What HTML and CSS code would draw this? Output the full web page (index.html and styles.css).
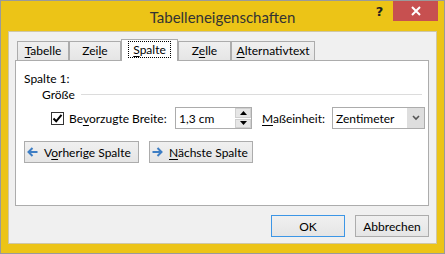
FILE: index.html
```html
<!DOCTYPE html>
<html lang="de">
<head>
<meta charset="utf-8">
<title>Tabelleneigenschaften</title>
<link rel="stylesheet" href="styles.css">
</head>
<body>
<div class="window">
  <div class="titlebar">
    <div></div>
    <div class="title">Tabelleneigenschaften</div>
    <div class="controls">
      <span class="help">?</span>
      <span class="close"><svg width="10" height="10" viewBox="0 0 10 10"><path d="M1 1 L9 9 M9 1 L1 9" stroke="#fff" stroke-width="2"/></svg></span>
    </div>
  </div>
  <div class="client">
    <div class="tabs">
      <div class="tab t1"><span><u>T</u>abelle</span></div>
      <div class="tab t2"><span>Zei<u>l</u>e</span></div>
      <div class="tab t3 active"><span class="focus"><u>S</u>palte</span></div>
      <div class="tab t4"><span>Z<u>e</u>lle</span></div>
      <div class="tab t5"><span><u>A</u>lternativtext</span></div>
    </div>
    <div class="panel">
      <div class="heading">Spalte 1:</div>
      <div class="group"><span>Größe</span><span class="rule"></span></div>
      <div class="row">
        <span class="checkbox"><svg width="11" height="11" viewBox="0 0 11 11"><path d="M1.5 5.5 L4.2 8.3 L9.5 1.8" fill="none" stroke="#000" stroke-width="2"/></svg></span>
        <span class="label width-label">Be<u>v</u>orzugte Breite:</span>
        <div class="spin">
          <span class="value">1,3 cm</span>
          <span class="spinbtns">
            <span class="sb"><svg width="7" height="4" viewBox="0 0 7 4"><path d="M0 4 L3.5 0 L7 4 Z" fill="#000"/></svg></span>
            <span class="sb"><svg width="7" height="4" viewBox="0 0 7 4"><path d="M0 0 L3.5 4 L7 0 Z" fill="#000"/></svg></span>
          </span>
        </div>
        <span class="label unit"><u>M</u>aßeinheit:</span>
        <div class="select">
          <span class="value">Zentimeter</span>
          <span class="drop"><svg width="8" height="6" viewBox="0 0 8 6"><path d="M1 1 L4 4 L7 1" fill="none" stroke="#555" stroke-width="1.6"/></svg></span>
        </div>
      </div>
      <div class="navrow">
        <div class="btn nav prev"><svg width="11" height="10" viewBox="0 0 11 10"><path d="M10.5 5 H2 M5.5 1 L1.5 5 L5.5 9" fill="none" stroke="#3e7ec4" stroke-width="2"/></svg><span>V<u>o</u>rherige Spalte</span></div>
        <div class="btn nav next"><svg width="11" height="10" viewBox="0 0 11 10"><path d="M0.5 5 H9 M5.5 1 L9.5 5 L5.5 9" fill="none" stroke="#3e7ec4" stroke-width="2"/></svg><span><u>N</u>ächste Spalte</span></div>
      </div>
    </div>
    <div class="footer">
      <div class="btn ok">OK</div>
      <div class="btn cancel">Abbrechen</div>
    </div>
  </div>
</div>
</body>
</html>
```

FILE: styles.css
```css
* { box-sizing: border-box; }
html, body { margin: 0; padding: 0; }
body {
  width: 445px;
  height: 254px;
  overflow: hidden;
  font-family: Lato, "Noto Sans", sans-serif;
  font-size: 12px;
  color: #000;
  white-space: nowrap;
}
u { text-decoration: underline; text-underline-offset: 2px; text-decoration-thickness: 1px; }

.window {
  width: 445px;
  height: 254px;
  border: 1px solid #9a9a9a;
  background: #ecc417;
  padding: 0 7px 9px 7px;
  display: flex;
  flex-direction: column;
}
.titlebar {
  height: 30px;
  margin: 0 -7px;
  display: grid;
  grid-template-columns: 1fr auto 1fr;
  align-items: center;
}
.title {
  font-size: 15px;
  color: #333;
  padding-top: 1px;
}
.controls {
  align-self: start;
  justify-self: end;
  display: flex;
  margin-right: 6px;
}
.help {
  width: 29px;
  height: 20px;
  display: flex;
  align-items: center;
  justify-content: center;
  font-family: "DejaVu Sans", sans-serif;
  font-weight: bold;
  font-size: 13px;
  color: #222;
  padding-left: 2px;
}
.close {
  width: 45px;
  height: 20px;
  background: #c75050;
  display: flex;
  align-items: center;
  justify-content: center;
}

.client {
  height: 213px;
  border: 1px solid #cfc7a6;
  background: #f0f0f0;
  padding: 7px 7px 6px 6px;
  display: flex;
  flex-direction: column;
}
.tabs {
  height: 21px;
  display: flex;
  align-items: flex-end;
  padding-left: 2px;
}
.tab {
  height: 19px;
  border: 1px solid #acacac;
  border-bottom: none;
  background: linear-gradient(#f0f0f0, #e5e5e5);
  display: flex;
  align-items: center;
  justify-content: center;
  padding-bottom: 1px;
}
.t1 { width: 52px; }
.t2 { width: 52px; }
.t3 { width: 57px; }
.t4 { width: 53px; }
.t5 { width: 84px; }
.tab.active {
  height: 22px;
  margin-bottom: -1px;
  background: #fff;
  position: relative;
  z-index: 1;
  padding-bottom: 3px;
}
.focus {
  outline: 1px dotted #000;
  padding: 1px 4px 0 4px;
  line-height: 14px;
}

.panel {
  height: 146px;
  border: 1px solid #acacac;
  background: #fff;
  padding: 10px 6px 0 8px;
  display: flex;
  flex-direction: column;
}
.heading { line-height: 15px; }
.group {
  display: flex;
  align-items: center;
  margin-left: 18px;
  margin-top: 1px;
  line-height: 15px;
}
.rule {
  flex: 1;
  height: 1px;
  background: #dcdcdc;
  margin-left: 6px;
}
.row {
  display: flex;
  align-items: center;
  margin-top: 5px;
  height: 22px;
}
.row > * { flex: none; }
.checkbox {
  width: 13px;
  height: 13px;
  border: 1px solid #333;
  background: #fff;
  margin-left: 27px;
  display: flex;
  align-items: center;
  justify-content: center;
}
.width-label { width: 111px; padding-left: 5px; }
.spin {
  width: 77px;
  height: 22px;
  border: 1px solid #acacac;
  display: flex;
  align-items: center;
  padding-left: 3px;
}
.spin .value { flex: 1; }
.spinbtns {
  width: 16px;
  height: 20px;
  display: flex;
  flex-direction: column;
  gap: 1px;
}
.sb {
  flex: 1;
  background: #e6e6e6;
  border: 1px solid #cfcfcf;
  display: flex;
  align-items: center;
  justify-content: center;
}
.unit { width: 80px; padding-left: 10px; }
.select {
  width: 93px;
  height: 22px;
  border: 1px solid #acacac;
  display: flex;
  align-items: center;
  padding-left: 3px;
}
.select .value { flex: 1; }
.drop {
  width: 17px;
  height: 20px;
  background: #dedede;
  display: flex;
  align-items: center;
  justify-content: center;
}

.navrow {
  display: flex;
  gap: 10px;
  margin-top: 12px;
}
.btn {
  height: 22px;
  border: 1px solid #acacac;
  background: linear-gradient(#f0f0f0, #e5e5e5);
  display: flex;
  align-items: center;
  justify-content: center;
}
.nav { justify-content: flex-start; padding-left: 2px; gap: 6px; }
.prev { width: 115px; }
.next { width: 104px; }

.footer {
  margin-top: 9px;
  display: flex;
  justify-content: flex-end;
  gap: 10px;
}
.ok { width: 74px; border-color: #3c96e6; }
.cancel { width: 74px; }
```
